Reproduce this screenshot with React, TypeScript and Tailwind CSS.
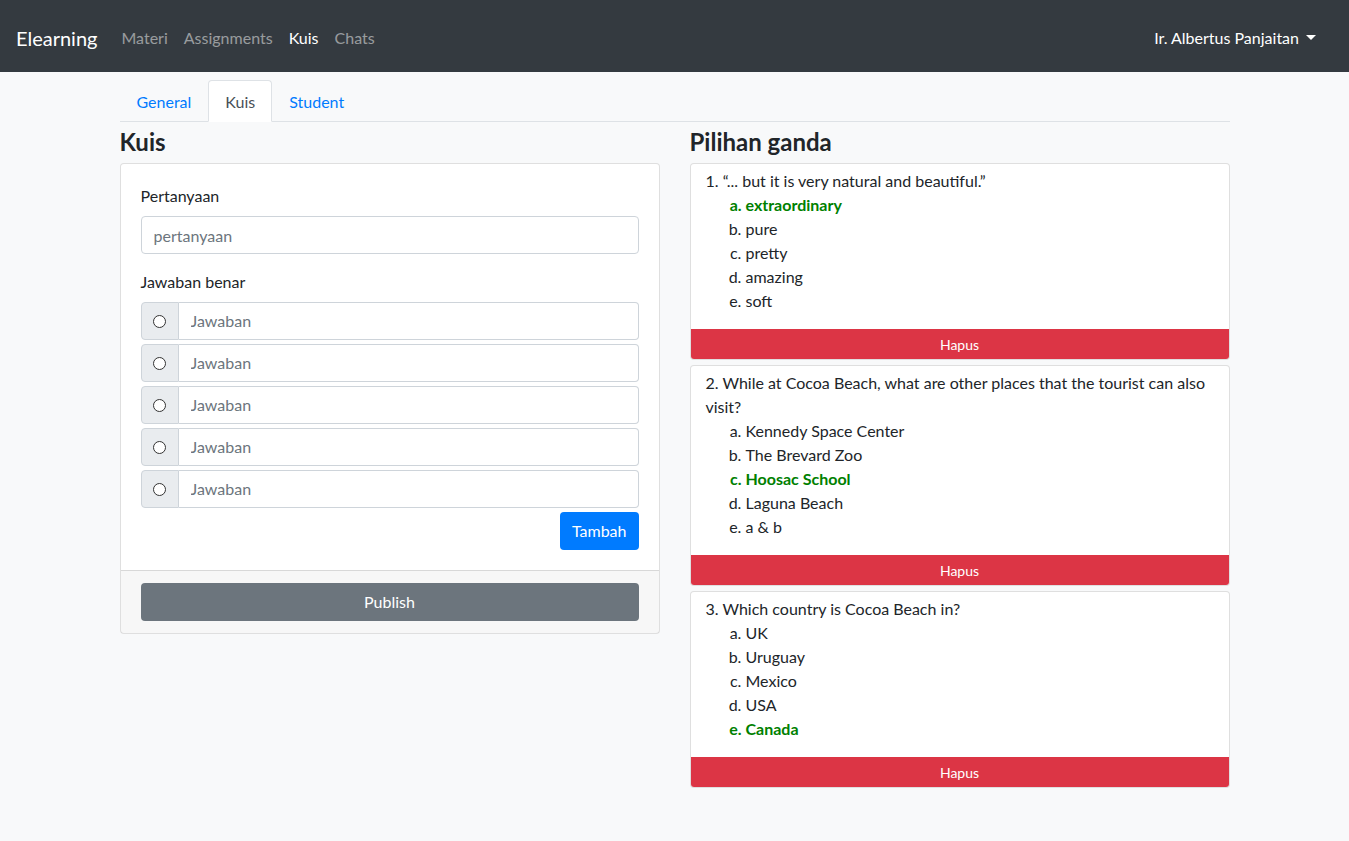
import React from 'react';

type Question = {
  no: number;
  text: string;
  options: string[];
  answer: number;
};

const questions: Question[] = [
  {
    no: 1,
    text: '“... but it is very natural and beautiful.”',
    options: ['extraordinary', 'pure', 'pretty', 'amazing', 'soft'],
    answer: 0,
  },
  {
    no: 2,
    text: 'While at Cocoa Beach, what are other places that the tourist can also visit?',
    options: ['Kennedy Space Center', 'The Brevard Zoo', 'Hoosac School', 'Laguna Beach', 'a & b'],
    answer: 2,
  },
  {
    no: 3,
    text: 'Which country is Cocoa Beach in?',
    options: ['UK', 'Uruguay', 'Mexico', 'USA', 'Canada'],
    answer: 4,
  },
];

const Navbar: React.FC = () => (
  <nav className="h-[72px] bg-[#343a40] flex items-center pl-4 pr-[33px] pt-[3px]">
    <span className="text-white text-[20px] leading-[30px] mr-4">Elearning</span>
    <ul className="flex items-center">
      <li className="px-2 text-white/50">Materi</li>
      <li className="px-2 text-white/50">Assignments</li>
      <li className="px-2 text-white">Kuis</li>
      <li className="px-2 text-white/50">Chats</li>
    </ul>
    <div className="ml-auto flex items-center text-white">
      Ir. Albertus Panjaitan
      <span className="ml-[7px] w-0 h-0 border-l-[5px] border-r-[5px] border-t-[5px] border-l-transparent border-r-transparent border-t-white"></span>
    </div>
  </nav>
);

const AnswerInput: React.FC = () => (
  <div className="flex h-[38px] mb-1">
    <div className="w-[38px] shrink-0 flex items-center justify-center bg-[#e9ecef] border border-[#ced4da] rounded-l-[4px]">
      <span className="w-[13px] h-[13px] rounded-full border border-[#333] bg-white"></span>
    </div>
    <input
      type="text"
      placeholder="Jawaban"
      className="flex-1 min-w-0 bg-white border border-l-0 border-[#ced4da] rounded-r-[4px] px-3 text-[#495057] placeholder:text-[#6c757d] outline-none"
    />
  </div>
);

const QuestionCard: React.FC<{ q: Question }> = ({ q }) => (
  <div className="bg-white border border-black/[.125] rounded-[4px] mb-[5px] overflow-hidden">
    <div className="px-[15px] pt-[5px]">
      <p>{`${q.no}. ${q.text}`}</p>
      <ol className="list-[lower-alpha] pl-10 mb-4">
        {q.options.map((opt, i) => (
          <li key={i} className={i === q.answer ? 'text-[#008000] font-bold' : ''}>
            {opt}
          </li>
        ))}
      </ol>
    </div>
    <button className="w-full h-[30px] pt-px bg-[#dc3545] text-white text-[14px]">Hapus</button>
  </div>
);

const App: React.FC = () => {
  return (
    <div
      className="min-h-[841px] bg-[#f8f9fa] text-[#212529] text-[16px] leading-6"
      style={{ fontFamily: 'Lato, "Liberation Sans", sans-serif' }}
    >
      <Navbar />
      <div className="w-[1110px] mx-auto pt-2">
        <ul className="flex border-b border-[#dee2e6] h-[42px]">
          <li className="px-4 pt-[9px] pb-[7px] border border-transparent text-[#007bff]">General</li>
          <li className="px-4 pt-[9px] pb-[7px] border border-[#dee2e6] border-b-white bg-white rounded-t-[4px] text-[#495057] -mb-px">Kuis</li>
          <li className="px-4 pt-[9px] pb-[7px] border border-transparent text-[#007bff]">Student</li>
        </ul>

        <div className="grid grid-cols-2 gap-[30px]">
          <div>
            <h3 className="text-[24px] leading-[29px] font-bold mt-[5px] mb-[7px]">Kuis</h3>
            <div className="bg-white border border-black/[.125] rounded-[4px]">
              <div className="p-5">
                <label className="block mb-2">Pertanyaan</label>
                <input
                  type="text"
                  placeholder="pertanyaan"
                  className="w-full h-[38px] border border-[#ced4da] rounded-[4px] px-3 mb-4 placeholder:text-[#6c757d] outline-none"
                />
                <label className="block mb-2">Jawaban benar</label>
                <AnswerInput />
                <AnswerInput />
                <AnswerInput />
                <AnswerInput />
                <AnswerInput />
                <div className="flex justify-end">
                  <button className="h-[38px] px-3 bg-[#007bff] text-white rounded-[4px]">Tambah</button>
                </div>
              </div>
              <div className="border-t border-black/[.125] bg-black/[.03] px-5 py-3">
                <button className="w-full h-[38px] bg-[#6c757d] text-white rounded-[4px]">Publish</button>
              </div>
            </div>
          </div>

          <div>
            <h3 className="text-[24px] leading-[29px] font-bold mt-[5px] mb-[7px]">Pilihan ganda</h3>
            {questions.map((q) => (
              <QuestionCard key={q.no} q={q} />
            ))}
          </div>
        </div>
      </div>
    </div>
  );
};

export default App;
